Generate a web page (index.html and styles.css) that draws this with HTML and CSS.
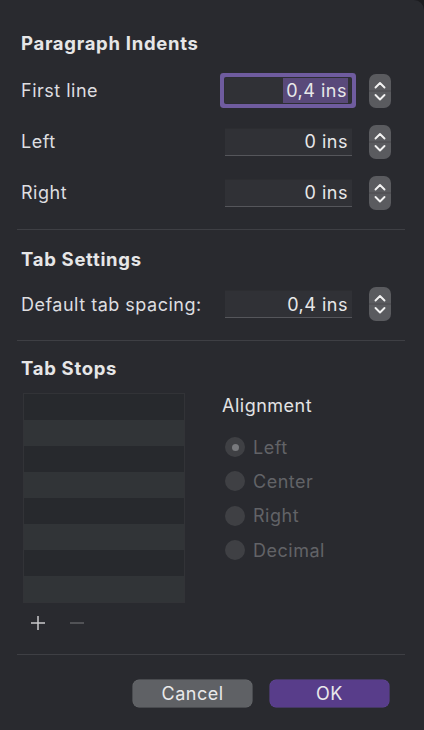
FILE: index.html
```html
<!DOCTYPE html>
<html>
<head>
<meta charset="utf-8">
<link rel="stylesheet" href="styles.css">
</head>
<body>
<div class="dialog">
  <section class="section first">
    <h2 class="heading">Paragraph Indents</h2>
    <div class="row">
      <span class="label">First line</span>
      <div class="controls">
        <div class="field focus"><span class="sel">0,4 ins</span></div>
        <div class="stepper"><svg viewBox="0 0 22 34" width="22" height="34"><path d="M6.5 13.5 L11 9 L15.5 13.5" /><path d="M6.5 21 L11 25.5 L15.5 21" /><line class="mid" x1="0" y1="17" x2="22" y2="17"/></svg></div>
      </div>
    </div>
    <div class="row">
      <span class="label">Left</span>
      <div class="controls">
        <div class="field"><span>0 ins</span></div>
        <div class="stepper"><svg viewBox="0 0 22 34" width="22" height="34"><path d="M6.5 13.5 L11 9 L15.5 13.5" /><path d="M6.5 21 L11 25.5 L15.5 21" /><line class="mid" x1="0" y1="17" x2="22" y2="17"/></svg></div>
      </div>
    </div>
    <div class="row">
      <span class="label">Right</span>
      <div class="controls">
        <div class="field"><span>0 ins</span></div>
        <div class="stepper"><svg viewBox="0 0 22 34" width="22" height="34"><path d="M6.5 13.5 L11 9 L15.5 13.5" /><path d="M6.5 21 L11 25.5 L15.5 21" /><line class="mid" x1="0" y1="17" x2="22" y2="17"/></svg></div>
      </div>
    </div>
  </section>
  <hr class="divider d1">
  <section class="section tabset">
    <h2 class="heading">Tab Settings</h2>
    <div class="row">
      <span class="label">Default tab spacing:</span>
      <div class="controls">
        <div class="field"><span>0,4 ins</span></div>
        <div class="stepper"><svg viewBox="0 0 22 34" width="22" height="34"><path d="M6.5 13.5 L11 9 L15.5 13.5" /><path d="M6.5 21 L11 25.5 L15.5 21" /><line class="mid" x1="0" y1="17" x2="22" y2="17"/></svg></div>
      </div>
    </div>
  </section>
  <hr class="divider">
  <section class="section stops">
    <h2 class="heading">Tab Stops</h2>
    <div class="stops-body">
      <div class="list-col">
        <div class="list">
          <div class="li"></div><div class="li alt"></div>
          <div class="li"></div><div class="li alt"></div>
          <div class="li"></div><div class="li alt"></div>
          <div class="li"></div><div class="li alt"></div>
        </div>
        <div class="list-btns">
          <svg class="plus" viewBox="0 0 18 18" width="18" height="18"><path d="M9 2 V16 M2 9 H16"/></svg>
          <svg class="minus" viewBox="0 0 18 18" width="18" height="18"><path d="M2 9 H16"/></svg>
        </div>
      </div>
      <div class="align">
        <div class="align-title">Alignment</div>
        <div class="radio"><span class="dot checked"></span>Left</div>
        <div class="radio"><span class="dot"></span>Center</div>
        <div class="radio"><span class="dot"></span>Right</div>
        <div class="radio"><span class="dot"></span>Decimal</div>
      </div>
    </div>
  </section>
  <hr class="divider d3">
  <div class="buttons">
    <button class="btn cancel">Cancel</button>
    <button class="btn ok">OK</button>
  </div>
</div>
</body>
</html>
```
FILE: styles.css
```css
html, body {
  margin: 0;
  padding: 0;
  background: #1c1c1f;
}
body {
  width: 424px;
  height: 730px;
  overflow: hidden;
  font-family: Inter, "Noto Sans", sans-serif;
  color: #dfdfe0;
  letter-spacing: 0.5px;
}
.dialog {
  width: 424px;
  height: 730px;
  box-sizing: border-box;
  background: #292a2f;
  border-top-right-radius: 10px;
  padding: 0 17px 0 17px;
  display: flex;
  flex-direction: column;
}
.section {
  padding: 0 4px;
}
.section.first {
  padding-top: 31px;
}
.heading {
  margin: 0;
  font-size: 18.5px;
  font-weight: 700;
  line-height: 24px;
  color: #e6e6e7;
  letter-spacing: 0.7px;
}
.row {
  display: flex;
  align-items: center;
  justify-content: space-between;
  height: 51px;
}
.section.first .heading { margin-bottom: 10px; }
.label {
  font-size: 18px;
  color: #dedee0;
}
.controls {
  display: flex;
  align-items: center;
  gap: 17px;
  margin-right: 12px;
}
.field {
  width: 127px;
  height: 28px;
  box-sizing: border-box;
  background: #303136;
  border-bottom: 1px solid #55565b;
  border-top: 1px solid #2c2d31;
  display: flex;
  align-items: center;
  justify-content: flex-end;
  padding-right: 4px;
  font-size: 18px;
  color: #e8e8e9;
}
.field.focus {
  width: 126px;
  height: 25px;
  border: none;
  box-shadow: 0 0 0 1px #2d2e33, 0 0 0 5px #6f5c9f;
  border-radius: 1px;
  padding-right: 3px;
  margin-right: 1px;
}
.sel {
  background: #59497a;
  padding: 1px 1px 1px 3px;
  line-height: 23px;
}
.stepper {
  width: 22px;
  height: 34px;
  border-radius: 7px;
  background: #5a5b5f;
  display: flex;
}
.stepper svg path {
  fill: none;
  stroke: #f2f2f2;
  stroke-width: 1.9;
  stroke-linecap: round;
  stroke-linejoin: round;
}
.stepper svg .mid {
  stroke: #4a4b4f;
  stroke-width: 1;
}
.divider {
  border: none;
  border-top: 1px solid #3e3f44;
  margin: 0;
  width: 388px;
}
.divider.d1 { margin-top: 11px; }
.tabset { padding-top: 17px; }
.tabset .heading { margin-bottom: 16px; }
.tabset .row { height: 34px; margin-bottom: 19px; }
.stops { padding-top: 15px; }
.stops .heading { margin-bottom: 0; }
.stops-body {
  display: flex;
  margin-top: 13px;
}
.list-col {
  display: flex;
  flex-direction: column;
  margin-left: 2px;
}
.list {
  width: 162px;
  border: 1px solid #323337;
  box-sizing: border-box;
}
.li {
  height: 26px;
  background: #27292d;
}
.li.alt {
  background: #313437;
}
.list-btns {
  display: flex;
  gap: 21px;
  padding: 11px 0 0 6px;
  height: 40px;
  box-sizing: border-box;
}
.list-btns svg path {
  stroke-width: 1.5;
  fill: none;
}
.plus path { stroke: #c9c9cb; }
.minus path { stroke: #5f6064; }
.align {
  margin-left: 37px;
  padding-top: 1px;
}
.align-title {
  font-size: 18px;
  line-height: 24px;
  color: #e3e3e4;
  margin-bottom: 12px;
}
.radio {
  display: flex;
  align-items: center;
  gap: 8px;
  height: 34.3px;
  font-size: 18px;
  color: #626367;
}
.dot {
  width: 20px;
  height: 20px;
  margin-left: 3px;
  border-radius: 50%;
  background: #3f4044;
  display: flex;
  align-items: center;
  justify-content: center;
  flex: none;
}
.dot.checked::after {
  content: "";
  width: 7px;
  height: 7px;
  border-radius: 50%;
  background: #78797d;
}
.divider.d3 { margin-top: 11px; }
.buttons {
  display: flex;
  justify-content: flex-end;
  gap: 18px;
  padding: 25px 18px 0 0;
}
.btn {
  width: 119px;
  height: 27px;
  border: none;
  border-radius: 6px;
  font-family: Inter, "Noto Sans", sans-serif;
  font-size: 18px;
  letter-spacing: 0.5px;
  color: #e9e9ea;
  padding: 0;
}
.cancel {
  background: #5f6165;
  box-shadow: 0 0 0 0.5px #6a6c70;
}
.ok {
  background: #583d8a;
  box-shadow: 0 0 0 0.5px #63479a;
}
```
